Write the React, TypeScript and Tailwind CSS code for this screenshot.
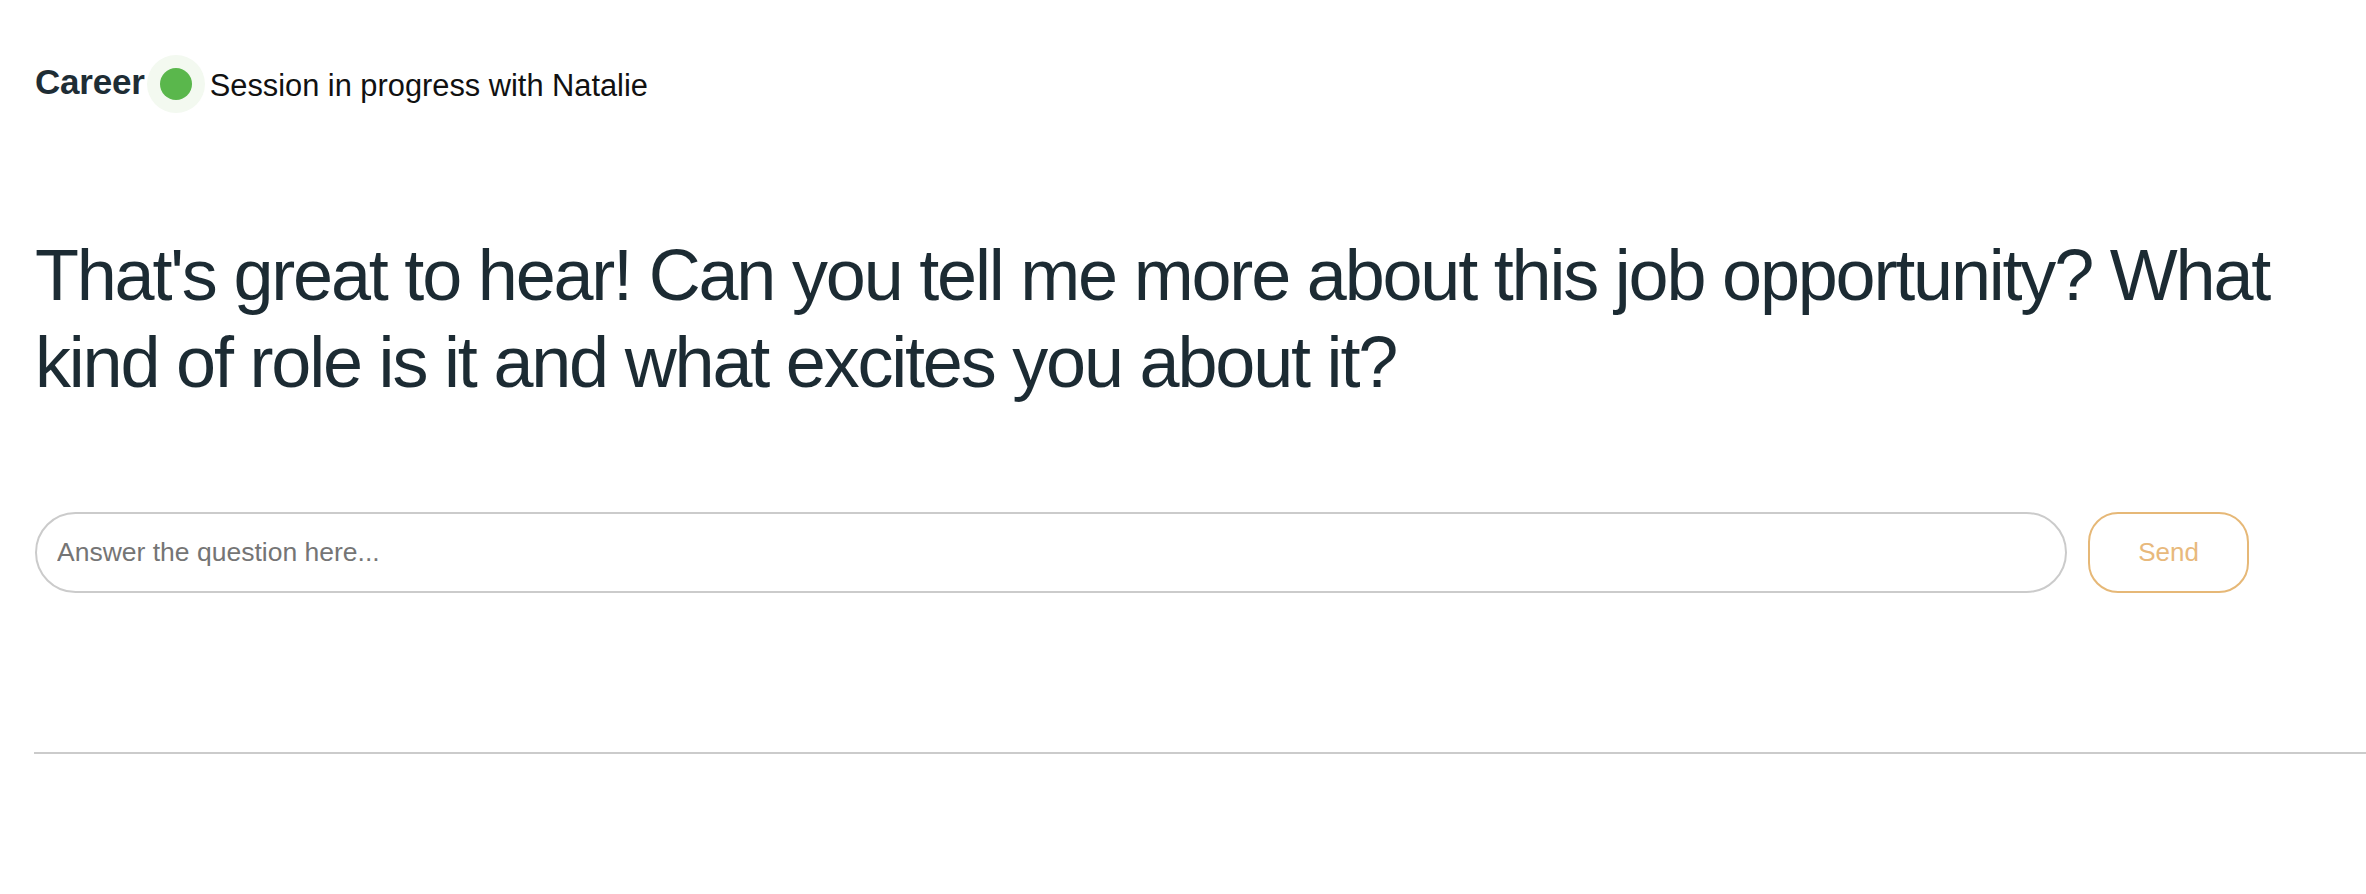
import { useState } from "react";

export default function App() {
  const [answer, setAnswer] = useState("");

  return (
    <div className="min-h-screen bg-white font-['Liberation_Sans',Arial,sans-serif]">
      <div className="flex items-center pl-[35px] pt-[55px]">
        <span className="mb-[6px] text-[35px] leading-none font-bold tracking-[-0.2px] text-[#1e2d35]">
          Career
        </span>
        <div className="ml-[2px] flex h-[58px] w-[58px] items-center justify-center rounded-full bg-[#f3f9f0]">
          <div className="h-[32px] w-[32px] rounded-full bg-[#5ab74c]" />
        </div>
        <span className="ml-[5px] mt-[5px] text-[30.8px] leading-none text-[#111111]">
          Session in progress with Natalie
        </span>
      </div>

      <h1 className="mt-[119px] pl-[35px] pr-[35px] text-[72px] leading-[87px] font-normal tracking-[-2.2px] text-[#1c2b33]">
        That's great to hear! Can you tell me more about this job opportunity? What kind of role is it and
        what excites you about it?
      </h1>

      <div className="mt-[106px] flex gap-[21px] pl-[35px]">
        <input
          value={answer}
          onChange={(e) => setAnswer(e.target.value)}
          type="text"
          placeholder="Answer the question here..."
          className="h-[81px] w-[2032px] rounded-full border-2 border-[#cbcbcb] px-[20px] text-[26.5px] text-[#333] outline-none placeholder:text-[#757575]"
        />
        <button className="h-[81px] w-[161px] rounded-[30px] border-2 border-[#e6b877] text-[26px] text-[#e8b97c]">
          Send
        </button>
      </div>

      <div className="ml-[34px] mt-[159px] h-[2px] bg-[#cbcbcb]" />
    </div>
  );
}
